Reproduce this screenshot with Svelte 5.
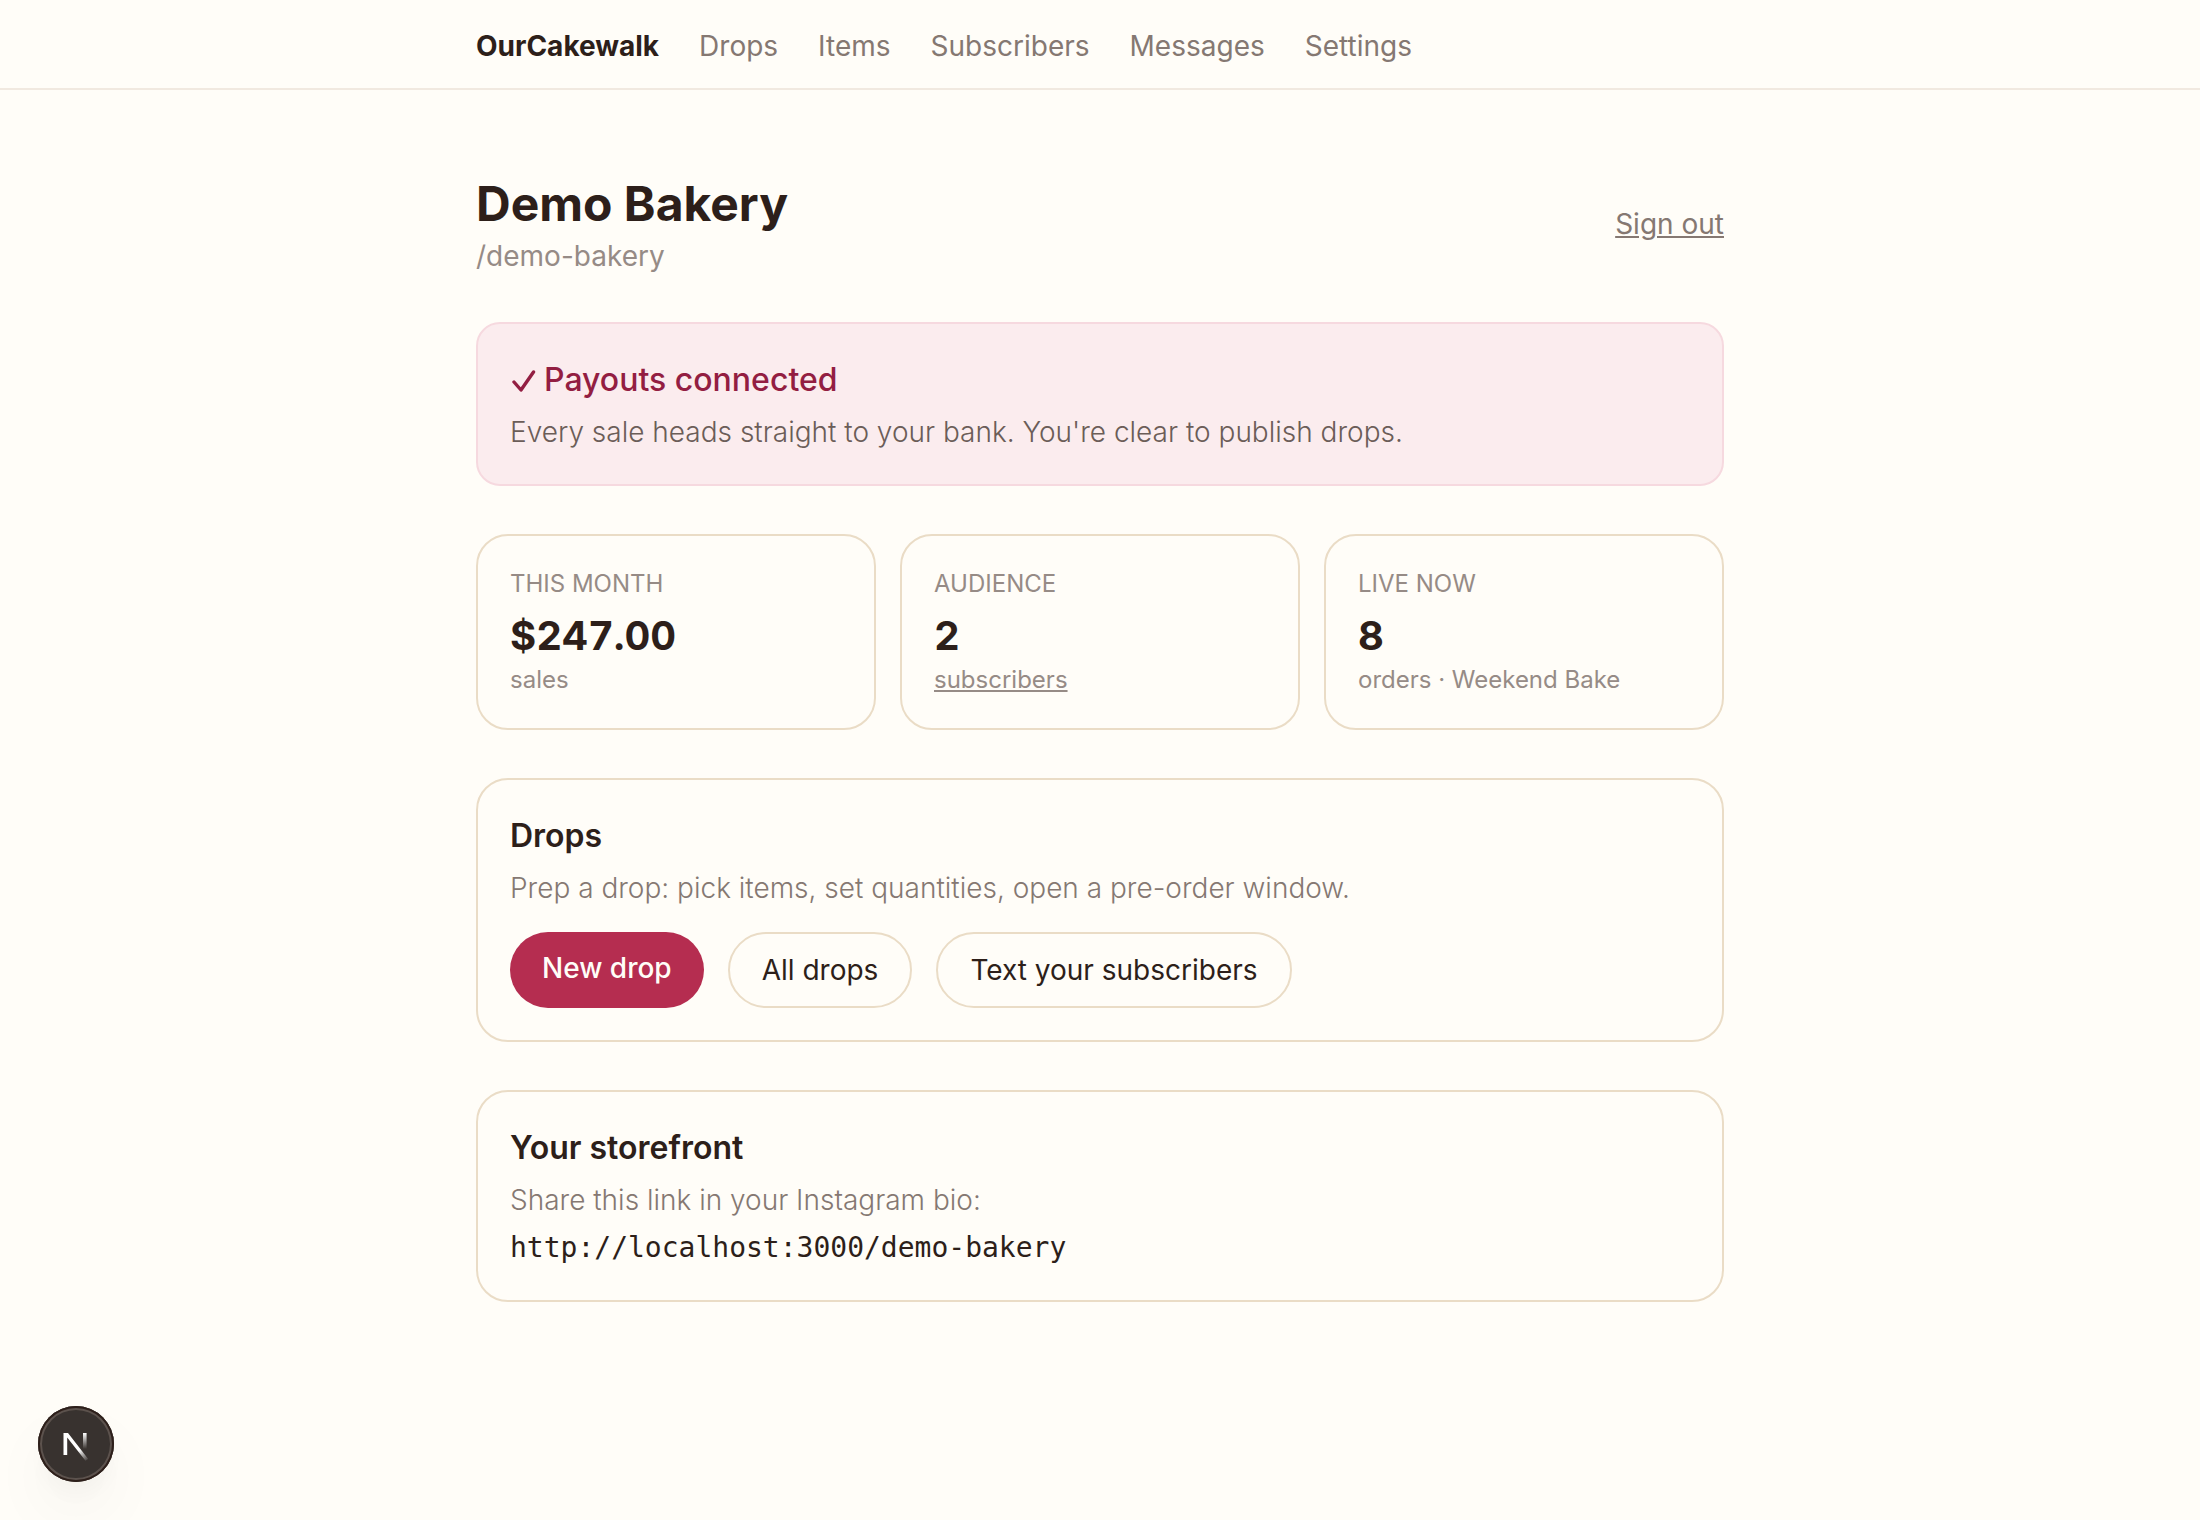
<script>
  const navLinks = [
    { label: 'Drops', href: '#drops' },
    { label: 'Items', href: '#items' },
    { label: 'Subscribers', href: '#subscribers' },
    { label: 'Messages', href: '#messages' },
    { label: 'Settings', href: '#settings' }
  ];

  const stats = [
    { label: 'This month', value: '$247.00', note: 'sales' },
    { label: 'Audience', value: '2', note: 'subscribers', href: '#subscribers' },
    { label: 'Live now', value: '8', note: 'orders · Weekend Bake' }
  ];

  const slug = 'demo-bakery';
  const storefrontUrl = `http://localhost:3000/${slug}`;
</script>

<header class="topbar">
  <nav class="container nav">
    <a class="brand" href="#home">OurCakewalk</a>
    {#each navLinks as link}
      <a class="nav-link" href={link.href}>{link.label}</a>
    {/each}
  </nav>
</header>

<main class="container main">
  <div class="page-header">
    <div>
      <h1>Demo Bakery</h1>
      <p class="slug">/{slug}</p>
    </div>
    <button class="sign-out" type="button">Sign out</button>
  </div>

  <section class="notice">
    <h2>
      <svg class="check" viewBox="0 0 26 24" fill="none" aria-hidden="true">
        <path d="M4 14 L11 22 L23.5 4" stroke="currentColor" stroke-width="3.4" stroke-linecap="round" stroke-linejoin="round" />
      </svg>
      Payouts connected
    </h2>
    <p>Every sale heads straight to your bank. You're clear to publish drops.</p>
  </section>

  <section class="stats">
    {#each stats as stat}
      <div class="card">
        <p class="stat-label">{stat.label}</p>
        <p class="stat-value">{stat.value}</p>
        <p class="stat-note">
          {#if stat.href}
            <a href={stat.href}>{stat.note}</a>
          {:else}
            {stat.note}
          {/if}
        </p>
      </div>
    {/each}
  </section>

  <section class="card" id="drops">
    <h2>Drops</h2>
    <p class="hint">Prep a drop: pick items, set quantities, open a pre-order window.</p>
    <div class="actions">
      <a class="btn primary" href="#new-drop">New drop</a>
      <a class="btn" href="#all-drops">All drops</a>
      <a class="btn" href="#messages">Text your subscribers</a>
    </div>
  </section>

  <section class="card">
    <h2>Your storefront</h2>
    <p class="hint">Share this link in your Instagram bio:</p>
    <code>{storefrontUrl}</code>
  </section>
</main>

<button class="dev-badge" type="button" aria-label="Open dev tools">
  <svg viewBox="0 0 76 76" fill="none" aria-hidden="true">
    <defs>
      <linearGradient id="diagonal" gradientUnits="userSpaceOnUse" x1="38" y1="39" x2="50" y2="55">
        <stop offset="0.3" stop-color="#fff" />
        <stop offset="1" stop-color="#fff" stop-opacity="0" />
      </linearGradient>
      <linearGradient id="stem" gradientUnits="userSpaceOnUse" x1="47" y1="27" x2="47" y2="43">
        <stop stop-color="#fff" />
        <stop offset="1" stop-color="#fff" stop-opacity="0" />
      </linearGradient>
    </defs>
    <path d="M25.5 27 H30 L50.2 53 L47.5 54.8 L29.2 31.5 V49 H25.5 Z" fill="url(#diagonal)" />
    <path d="M45 27 H48.6 V43 H45 Z" fill="url(#stem)" />
  </svg>
</button>

<style>
:global(body) {
  margin: 0;
  background: #fffdf8;
  color: #2d1f1a;
  font-family: Inter, "Liberation Sans", sans-serif;
  font-size: 28px;
  line-height: 40px;
}

h1,
h2,
p {
  margin: 0;
}

.container {
  box-sizing: border-box;
  max-width: 1344px;
  margin: 0 auto;
  padding: 0 48px;
}

.topbar {
  border-bottom: 2px solid #f1e9e0;
}

.nav {
  display: flex;
  align-items: center;
  gap: 40px;
  padding-top: 26px;
  padding-bottom: 22px;
}

.brand {
  color: #2d1f1a;
  font-weight: 700;
  text-decoration: none;
}

.nav-link {
  color: #857872;
  text-decoration: none;
}

.main {
  display: flex;
  flex-direction: column;
  gap: 48px;
  padding-top: 82px;
  padding-bottom: 80px;
}

.page-header {
  display: flex;
  justify-content: space-between;
  align-items: center;
  margin-bottom: -2px;
}

h1 {
  font-size: 48px;
  font-weight: 700;
  line-height: 64px;
}

.slug {
  color: #968b86;
}

.sign-out {
  padding: 0;
  border: none;
  background: none;
  color: #857872;
  font: inherit;
  text-decoration: underline;
  cursor: pointer;
}

.notice {
  padding: 32px;
  border: 2px solid #f6d9df;
  border-radius: 24px;
  background: #fbecee;
}

h2 {
  margin-bottom: 8px;
  font-size: 32px;
  font-weight: 600;
  line-height: 48px;
}

.notice h2 {
  display: flex;
  align-items: center;
  gap: 8px;
  color: #931e42;
  font-weight: 500;
}

.check {
  width: 26px;
  height: 24px;
}

.notice p {
  color: #6b5d58;
  font-weight: 350;
}

.stats {
  display: grid;
  grid-template-columns: repeat(3, 1fr);
  gap: 24px;
}

.card {
  padding: 32px;
  border: 2px solid #eadcc6;
  border-radius: 32px;
}

.stat-label,
.stat-note {
  color: #968b86;
  font-size: 24px;
  line-height: 32px;
}

.stat-label {
  text-transform: uppercase;
}

.stat-value {
  margin-top: 8px;
  font-size: 40px;
  font-weight: 700;
  font-variant-numeric: tabular-nums;
  line-height: 56px;
}

.stat-note a {
  color: inherit;
}

.hint {
  color: #857872;
  font-weight: 350;
}

.actions {
  display: flex;
  flex-wrap: wrap;
  gap: 24px;
  margin-top: 24px;
}

.btn {
  padding: 16px 32px;
  border: 2px solid #eadcc6;
  border-radius: 40px;
  color: #2d1f1a;
  text-decoration: none;
}

.btn.primary {
  border: none;
  background: #b52d50;
  color: #fffdf8;
  font-weight: 500;
}

code {
  display: block;
  margin-top: 8px;
  font-family: "DejaVu Sans Mono", monospace;
}

.dev-badge {
  position: fixed;
  bottom: 38px;
  left: 38px;
  width: 76px;
  height: 76px;
  padding: 0;
  border: none;
  border-radius: 50%;
  background: #38322f;
  box-shadow:
    inset 0 0 0 2px #2d1f1a,
    inset 0 0 0 4px #5c524d,
    0 16px 32px -8px rgba(45, 31, 26, 0.05),
    0 32px 64px rgba(45, 31, 26, 0.04);
  cursor: pointer;
}

.dev-badge svg {
  display: block;
}
</style>
